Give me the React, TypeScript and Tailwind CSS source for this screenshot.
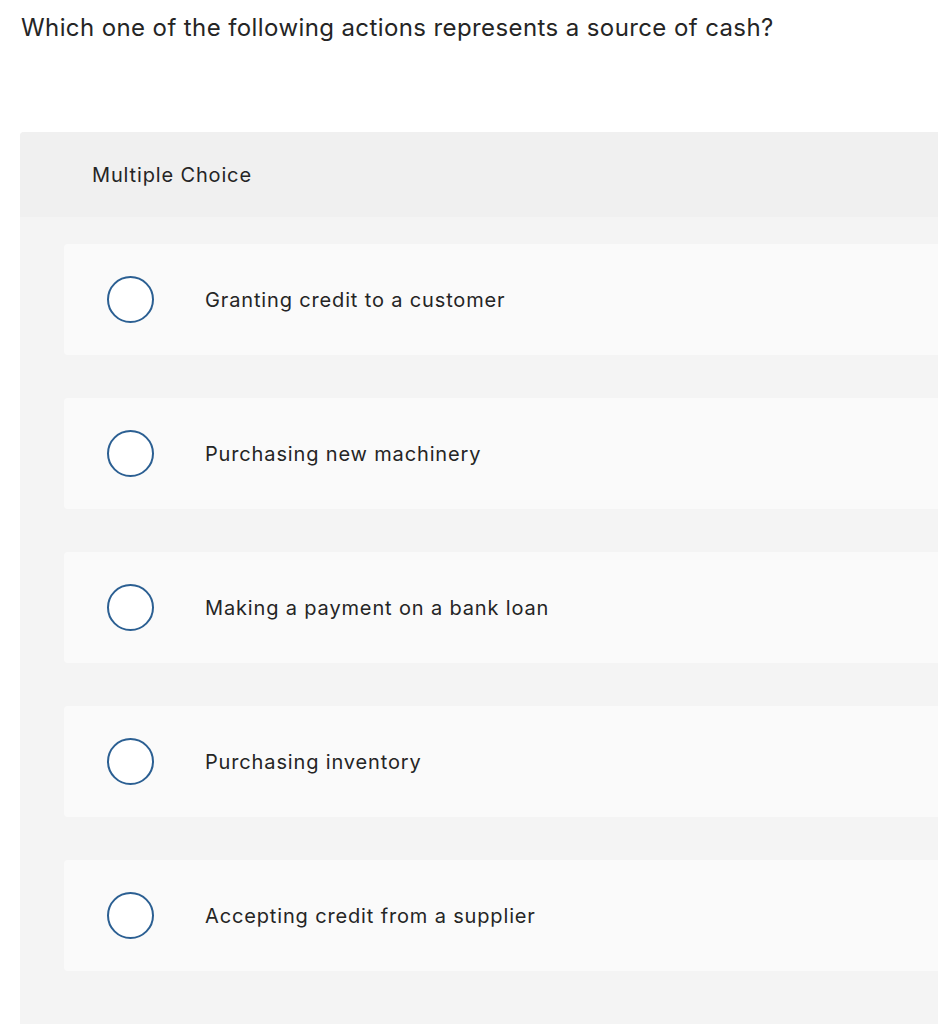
const options = [
  "Granting credit to a customer",
  "Purchasing new machinery",
  "Making a payment on a bank loan",
  "Purchasing inventory",
  "Accepting credit from a supplier",
];

export default function App() {
  return (
    <div className="min-h-[1024px] bg-white text-[#252525] font-['Inter',_'Liberation_Sans',_sans-serif]">
      <h1 className="pl-[21px] pt-[12px] text-[24px] leading-[32px] font-normal tracking-[0.4px]">
        Which one of the following actions represents a source of cash?
      </h1>

      <div className="ml-[20px] mt-[88px] rounded-tl-[4px] bg-[#f4f4f4] pb-[60px]">
        <div className="flex h-[85px] items-center rounded-tl-[4px] bg-[#f0f0f0] pl-[72px] text-[20px] tracking-[0.85px]">
          Multiple Choice
        </div>

        <div className="flex flex-col gap-[43px] pl-[44px] pt-[27px]">
          {options.map((label) => (
            <div
              key={label}
              className="flex h-[111px] items-center rounded-l-[4px] bg-[#fafafa]"
            >
              <span className="ml-[43px] h-[47px] w-[47px] shrink-0 rounded-full border-2 border-[#2b5f92] bg-white" />
              <span className="ml-[51px] text-[20px] tracking-[0.85px]">{label}</span>
            </div>
          ))}
        </div>
      </div>
    </div>
  );
}
